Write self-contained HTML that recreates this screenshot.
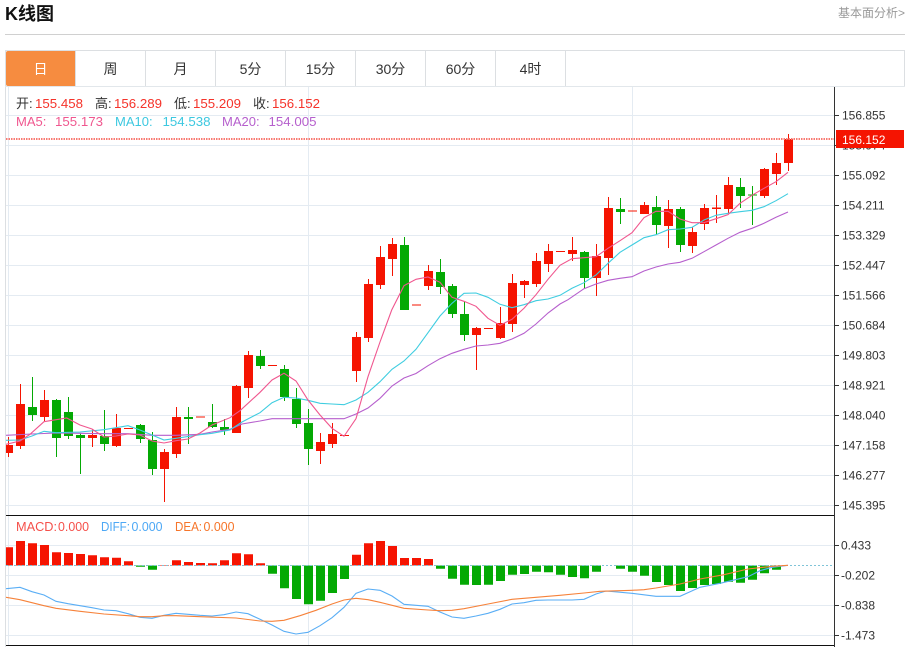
<!DOCTYPE html>
<html lang="zh">
<head>
<meta charset="utf-8">
<title>K线图</title>
<style>
html,body{margin:0;padding:0;background:#fff;width:908px;height:647px;overflow:hidden}
svg{display:block}
text{font-family:"Liberation Sans","Noto Sans CJK SC",sans-serif}
</style>
</head>
<body>
<svg width="908" height="647" viewBox="0 0 908 647" xmlns="http://www.w3.org/2000/svg">
<defs><clipPath id="c"><rect x="6" y="87" width="828" height="560"/></clipPath></defs>

<!-- header -->
<text x="5" y="20" font-size="18" font-weight="700" fill="#111">K线图</text>
<text x="838" y="17" font-size="12" fill="#999">基本面分析&gt;</text>
<rect x="5" y="34" width="900" height="1" fill="#d0d0d0"/>

<!-- tabs -->
<g fill="#dcdfe2">
<rect x="5" y="50" width="900" height="1"/>
<rect x="5" y="50" width="1" height="597"/>
<rect x="904" y="50" width="1" height="37"/>
<rect x="75" y="51" width="1" height="35"/><rect x="145" y="51" width="1" height="35"/><rect x="215" y="51" width="1" height="35"/><rect x="285" y="51" width="1" height="35"/><rect x="355" y="51" width="1" height="35"/><rect x="425" y="51" width="1" height="35"/><rect x="495" y="51" width="1" height="35"/><rect x="565" y="51" width="1" height="35"/>
<rect x="5" y="86" width="900" height="1" fill="#e2e7eb"/>
</g>
<path d="M8 51H75V86H8Q6 86 6 84V53Q6 51 8 51Z" fill="#f68c40"/>
<g font-size="14" fill="#333" text-anchor="middle">
<text x="40.5" y="74" fill="#fff">日</text>
<text x="110.5" y="74">周</text>
<text x="180.5" y="74">月</text>
<text x="250.5" y="74">5分</text>
<text x="320.5" y="74">15分</text>
<text x="390.5" y="74">30分</text>
<text x="460.5" y="74">60分</text>
<text x="530.5" y="74">4时</text>
</g>

<!-- grid -->
<path stroke="#e4ebf2" stroke-width="1" fill="none" d="M6 115.5H834M6 145.5H834M6 175.5H834M6 205.5H834M6 235.5H834M6 265.5H834M6 295.5H834M6 325.5H834M6 355.5H834M6 385.5H834M6 415.5H834M6 445.5H834M6 475.5H834M6 505.5H834M6 545.5H834M6 575.5H834M6 605.5H834M6 635.5H834M8.5 87V645M308.5 87V645M632.5 87V645"/>

<g clip-path="url(#c)">
<!-- wicks -->
<path fill="none" stroke="#f51401" stroke-width="1" d="M8.5 437V457M20.5 384V449M44.5 390V421M92.5 429V447M116.5 414V447M164.5 449V502M176.5 407V458M236.5 385V433M248.5 351V398M320.5 433V464M332.5 423V448M356.5 332V382M368.5 279V342M380.5 246V289M392.5 238V276M428.5 265V290M476.5 327V370M500.5 307V339M512.5 274V332M524.5 280V298M536.5 253V287M548.5 244V272M572.5 237V261M596.5 244V296M608.5 197V275M644.5 202V214M668.5 200V248M692.5 227V253M704.5 204V230M716.5 195V223M728.5 177V213M764.5 168V198M776.5 153V185M788.5 134V171"/>
<path fill="none" stroke="#04a904" stroke-width="1" d="M32.5 377V421M56.5 399V457M68.5 397V439M80.5 433V474M104.5 410V451M140.5 424V443M152.5 432V475M188.5 407V444M212.5 404V428M224.5 419V435M260.5 350V369M284.5 365V401M296.5 388V428M308.5 409V465M404.5 237V310M440.5 259V294M452.5 284V318M464.5 301V341M584.5 251V288M620.5 198V224M656.5 196V235M680.5 207V252M740.5 178V208M752.5 186V225"/>
<!-- bodies -->
<path fill="none" stroke="#f51401" stroke-width="9" d="M8.5 445V453M20.5 404V446M44.5 400V417M92.5 435V438M116.5 428V446M164.5 452V469M176.5 417V454M236.5 386V433M248.5 355V388M320.5 442V451M332.5 434V444M356.5 337V371M368.5 284V338M380.5 257V285M392.5 244V259M428.5 271V286M476.5 328V335M500.5 323V338M512.5 283V324M524.5 281V285M536.5 261V284M548.5 251V264M572.5 250V254M596.5 256V278M608.5 208V258M644.5 205V214M668.5 209V226M692.5 232V246M704.5 208V224M716.5 207.5V209M728.5 185V209M764.5 169V196M776.5 163V174M788.5 139V163"/>
<path fill="none" stroke="#04a904" stroke-width="9" d="M32.5 407V415M56.5 400V438M68.5 412V436M80.5 435V438M104.5 436V444M140.5 425V439M152.5 440V469M188.5 417V419M212.5 422V427M224.5 427V430M260.5 356V366M284.5 369V397M296.5 399V424M308.5 423V449M404.5 245V310M440.5 272V287M452.5 286V314M464.5 314V335M584.5 252V278M620.5 209V212M656.5 207V225M680.5 209V245M740.5 187V196M752.5 194.5V195.5"/>
<!-- flat candles -->
<path fill="none" stroke="#f51401" stroke-width="1" d="M124 428.5h9M196 417h9M268 365.5h9M340 435.5h9M412 305h9M484 328.5h9M556 251.5h9M628 211h9"/>

<!-- MA lines -->
<polyline fill="none" stroke="#b65fcd" stroke-width="1.1" points="6,435.3 32,434 56,433 80,433.3 104,433.7 128,433.7 152,435.3 176,435.3 200,434.3 212,432 230,429.3 242,424 260,421 272,418.7 308,418.7 344,418.7 356,414 368,408 380,398.3 392,386 404,378 416,373.5 428,365.7 440,358.7 452,353.3 464,349.3 476,346 488,345 500,343.3 512,339 524,333.3 536,324 548,313 560,304 568,299.7 584,288.7 596,284 608,280.3 620,278.3 632,276.7 644,271 656,267 668,264 680,262.3 692,258.3 704,251.7 716,245 728,238.3 740,232.3 752,228.3 764,223.3 776,217.3 788,212"/>
<polyline fill="none" stroke="#3fcde0" stroke-width="1.1" points="6,440.3 20,440 32,436 44,431.3 56,432.7 80,432 104,429.7 128,425.7 140,430 152,435 164,440 176,438.3 200,434.7 212,433.3 230,430 242,422 260,412.7 272,402.7 284,397.3 296,398 308,400.3 320,403.3 332,404 344,404.7 356,400 368,392.3 380,381.7 392,369.3 404,361 416,349.3 428,332.7 440,316 452,303.3 464,293.3 476,293 488,297.3 500,304.3 512,307.7 524,304.7 536,300.7 548,299 560,295.3 572,288.3 584,282.7 596,275 608,263.3 620,252.3 632,245 644,237.7 656,234.7 668,229.7 680,229 692,227.3 704,220 716,215.3 728,213.3 740,211.7 752,210.3 764,206.7 776,200.7 788,193.7"/>
<polyline fill="none" stroke="#f0578f" stroke-width="1.1" points="6,444.3 20,441 30,434.3 44,421.7 66.7,418 80,425 92,429 104,437 116,436 128,434 140,435 152,441 164,443 176,440.7 188,439 200,433 212,425 230,417.7 240,410.7 260,392.3 272,380 284,373.3 296,381 308,400 320,415 332,428.3 344,436.3 356,418.7 368,376.7 380,342 391.7,310 404,285.7 416,279.3 428,277 440,282.3 452,297.3 464,301.3 476,306.3 488,318.3 500,325.3 512,319.3 524,308.3 536,294.7 548,279.3 560,265.3 572,258.7 584,257.7 596,256.7 608,248.3 620,240.7 632,232.7 644,217.7 656,211.3 668,211.3 680,219 692,222.7 704,222.7 716,218.7 728,214.7 740,203.3 752,195.3 764,188.3 776,181.7 788,172.3"/>

<!-- MACD bars -->
<path fill="none" stroke="#f51401" stroke-width="9" d="M8.5 547.3V565.5M20.5 541V565.5M32.5 543.3V565.5M44.5 545V565.5M56.5 552.3V565.5M68.5 553V565.5M80.5 554V565.5M92.5 555.3V565.5M104.5 557.3V565.5M116.5 557.7V565.5M128.5 561.3V565.5M164.5 565V565.5M176.5 560.3V565.5M188.5 562V565.5M200.5 563V565.5M212.5 563.3V565.5M224.5 560.3V565.5M236.5 553.3V565.5M248.5 554.3V565.5M260.5 563.3V565.5M356.5 554.7V565.5M368.5 543.3V565.5M380.5 541V565.5M392.5 546V565.5M404.5 558V565.5M416.5 558V565.5M428.5 559V565.5"/>
<path fill="none" stroke="#04a904" stroke-width="9" d="M140.5 565.5V566.7M152.5 565.5V569.7M272.5 565.5V573.7M284.5 565.5V588.3M296.5 565.5V599M308.5 565.5V604.3M320.5 565.5V600.7M332.5 565.5V593M344.5 565.5V579M440.5 565.5V568.7M452.5 565.5V578.7M464.5 565.5V584.7M476.5 565.5V585M488.5 565.5V584.7M500.5 565.5V581M512.5 565.5V574.7M524.5 565.5V574M536.5 565.5V571.7M548.5 565.5V572.3M560.5 565.5V574.7M572.5 565.5V577M584.5 565.5V578.3M596.5 565.5V571.7M620.5 565.5V568.7M632.5 565.5V571.7M644.5 565.5V575.7M656.5 565.5V582M668.5 565.5V585M680.5 565.5V591M692.5 565.5V588M704.5 565.5V585M716.5 565.5V584M728.5 565.5V581.7M740.5 565.5V582.7M752.5 565.5V579.7M764.5 565.5V573.3M776.5 565.5V569.7"/>
<path stroke="#7fc4d8" stroke-width="1" stroke-dasharray="2 2" fill="none" d="M6 565.5H833"/>

<!-- MACD lines -->
<polyline fill="none" stroke="#5aaef5" stroke-width="1.1" points="6,588.7 20,587.3 32,591.7 44,595 56,601.3 68,603.7 80,605.7 92,607.7 104,610 116,610.7 128,613.7 140,617.3 152,618.3 164,615.3 176,613.3 188,614.3 200,615.3 212,616 224,614.7 236,612 248,613.7 260,619.3 272,625 284,631.3 296,634 308,632.3 320,625.7 332,617.7 344,607.3 356,593.3 368,589 380,590.3 392,596 404,604.3 416,605.3 428,606.3 440,612 452,617 464,618.3 476,616 488,613.3 500,609.3 512,604 524,602.7 536,600.3 548,600 560,600 572,600 584,599.3 596,594 606,591 632,593.3 656,596.3 680,596.3 700,587.3 720,583.3 748,576.7 760,570.7 772,567.3 788,565.3"/>
<polyline fill="none" stroke="#f6823a" stroke-width="1.1" points="6,597.3 20,599.7 44,605.7 56,608.3 80,611.3 104,614 128,615.7 140,616.7 152,616.7 164,615.7 176,615.7 200,616.7 236,618 260,621 272,621.3 284,620.3 300,615.7 316,610.3 332,604 344,600 356,598.3 368,599.7 380,602.3 404,608.3 428,610 440,610.7 452,610.3 464,608.7 488,604 512,599.3 536,597.3 560,595.3 584,593 600,591.3 632,590.3 644,589.7 656,588 680,584 700,579 724,574.7 748,569 772,566.3 788,565.3"/>
</g>

<!-- axis & separators -->
<rect x="6" y="515" width="828" height="1" fill="#111"/>
<rect x="6" y="645" width="828" height="1" fill="#111"/>
<rect x="834" y="87" width="1" height="560" fill="#333"/>
<path stroke="#333" stroke-width="1" fill="none" d="M834 115.5h5M834 145.5h5M834 175.5h5M834 205.5h5M834 235.5h5M834 265.5h5M834 295.5h5M834 325.5h5M834 355.5h5M834 385.5h5M834 415.5h5M834 445.5h5M834 475.5h5M834 505.5h5M834 545.5h5M834 575.5h5M834 605.5h5M834 635.5h5"/>
<g font-size="12" fill="#333">
<text x="842" y="119.5">156.855</text>
<text x="842" y="149.5">155.974</text>
<text x="842" y="179.5">155.092</text>
<text x="842" y="209.5">154.211</text>
<text x="842" y="239.5">153.329</text>
<text x="842" y="269.5">152.447</text>
<text x="842" y="299.5">151.566</text>
<text x="842" y="329.5">150.684</text>
<text x="842" y="359.5">149.803</text>
<text x="842" y="389.5">148.921</text>
<text x="842" y="419.5">148.040</text>
<text x="842" y="449.5">147.158</text>
<text x="842" y="479.5">146.277</text>
<text x="842" y="509.5">145.395</text>
<text x="841" y="549.5">0.433</text>
<text x="841" y="579.5">-0.202</text>
<text x="841" y="609.5">-0.838</text>
<text x="841" y="639.5">-1.473</text>
</g>

<!-- last price -->
<path stroke="#f87a72" stroke-width="2" stroke-dasharray="1.5 1" fill="none" d="M6 139H834"/>
<rect x="836" y="130" width="68" height="18" fill="#f51401"/>
<text x="842" y="144" font-size="12" fill="#fff">156.152</text>

<!-- legend -->
<g font-size="13">
<text x="16" y="108" fill="#333">开:</text><text x="35" y="108" fill="#f5332a" textLength="48" lengthAdjust="spacingAndGlyphs">155.458</text>
<text x="95" y="108" fill="#333">高:</text><text x="114" y="108" fill="#f5332a" textLength="48" lengthAdjust="spacingAndGlyphs">156.289</text>
<text x="174" y="108" fill="#333">低:</text><text x="193" y="108" fill="#f5332a" textLength="48" lengthAdjust="spacingAndGlyphs">155.209</text>
<text x="253" y="108" fill="#333">收:</text><text x="272" y="108" fill="#f5332a" textLength="48" lengthAdjust="spacingAndGlyphs">156.152</text>
<text x="16" y="126" fill="#f0578f">MA5:</text><text x="55" y="126" fill="#f0578f" textLength="48" lengthAdjust="spacingAndGlyphs">155.173</text>
<text x="115" y="126" fill="#3cc8e0">MA10:</text><text x="162.5" y="126" fill="#3cc8e0" textLength="48" lengthAdjust="spacingAndGlyphs">154.538</text>
<text x="222" y="126" fill="#b65fcd">MA20:</text><text x="268.5" y="126" fill="#b65fcd" textLength="48" lengthAdjust="spacingAndGlyphs">154.005</text>
<text x="16" y="531" fill="#f5504a" textLength="41" lengthAdjust="spacingAndGlyphs">MACD:</text><text x="58" y="531" fill="#f5504a" textLength="31" lengthAdjust="spacingAndGlyphs">0.000</text>
<text x="101" y="531" fill="#4da8f5" textLength="29" lengthAdjust="spacingAndGlyphs">DIFF:</text><text x="131.5" y="531" fill="#4da8f5" textLength="31" lengthAdjust="spacingAndGlyphs">0.000</text>
<text x="175" y="531" fill="#f6752a" textLength="27" lengthAdjust="spacingAndGlyphs">DEA:</text><text x="203.5" y="531" fill="#f6752a" textLength="31" lengthAdjust="spacingAndGlyphs">0.000</text>
</g>
</svg>
</body>
</html>
